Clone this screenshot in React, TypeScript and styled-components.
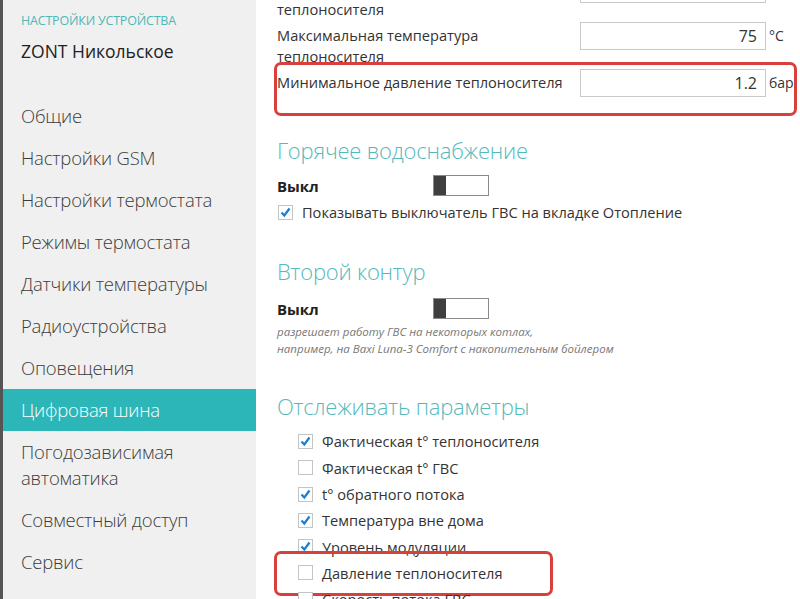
import styled, { createGlobalStyle } from 'styled-components';

const GlobalStyle = createGlobalStyle`
  html, body {
    margin: 0;
    padding: 0;
    height: 100%;
    overflow: hidden;
    background: #ffffff;
  }
  #root {
    height: 100%;
  }
`;

const Page = styled.div`
  display: flex;
  width: 800px;
  height: 599px;
  overflow: hidden;
  font-family: 'Open Sans', 'Noto Sans', sans-serif;
  color: #333;
`;

const Sidebar = styled.aside`
  flex: 0 0 253px;
  background: #f0f0f0;
  border-left: 3px solid #555;
  display: flex;
  flex-direction: column;
`;

const SidebarHead = styled.div`
  padding: 12px 0 0 18px;
  height: 95px;
  box-sizing: border-box;
  flex-shrink: 0;
`;

const Overline = styled.div`
  font-size: 12.5px;
  line-height: 18px;
  color: #4db8b8;
  text-transform: uppercase;
  letter-spacing: -0.2px;
`;

const DeviceName = styled.div`
  margin-top: 10px;
  font-size: 17.5px;
  line-height: 22px;
  color: #222;
`;

const Menu = styled.nav`
  display: flex;
  flex-direction: column;
`;

const MenuItem = styled.div<{ $active?: boolean }>`
  padding: 8px 12px 8px 18px;
  font-size: 18.5px;
  font-weight: 300;
  line-height: 26px;
  letter-spacing: -0.2px;
  color: ${(p) => (p.$active ? '#ffffff' : '#3c3c3c')};
  background: ${(p) => (p.$active ? '#2cb6b7' : 'transparent')};
`;

const Content = styled.main`
  flex: 1;
  padding: 0 0 0 21px;
  margin-top: -25px;
  display: flex;
  flex-direction: column;

  & > * {
    flex-shrink: 0;
  }
`;

const FieldRow = styled.div`
  position: relative;
  display: grid;
  grid-template-columns: 303px 186px auto;
  height: 47px;
  align-items: start;
`;

const FieldLabel = styled.div<{ $wide?: boolean }>`
  font-size: 14.6px;
  line-height: 21px;
  padding-top: 3px;
  color: #333;
  max-width: ${(p) => (p.$wide ? 'none' : '240px')};
  white-space: ${(p) => (p.$wide ? 'nowrap' : 'normal')};
`;

const FieldInput = styled.div`
  height: 28px;
  box-sizing: border-box;
  border: 1px solid #c9c9c9;
  background: #fff;
  font-size: 16px;
  line-height: 26px;
  text-align: right;
  padding-right: 8px;
  color: #333;
`;

const Unit = styled.div`
  font-size: 14px;
  line-height: 28px;
  padding-left: 3px;
  color: #333;
`;

const Highlight = styled.div<{ $top: number; $left: number; $width: number; $bottom: number }>`
  position: absolute;
  top: ${(p) => p.$top}px;
  left: ${(p) => p.$left}px;
  width: ${(p) => p.$width}px;
  bottom: ${(p) => p.$bottom}px;
  border: 3px solid #d8403b;
  border-radius: 7px;
  box-sizing: border-box;
  pointer-events: none;
`;

const SectionTitle = styled.h2<{ $gap: number }>`
  margin: ${(p) => p.$gap}px 0 0 0;
  font-size: 22px;
  font-weight: 300;
  line-height: 28px;
  color: #55b9ba;
  letter-spacing: -0.2px;
`;

const ToggleRow = styled.div<{ $gap?: number }>`
  display: grid;
  grid-template-columns: 156px 56px;
  align-items: center;
  margin-top: ${(p) => p.$gap ?? 9}px;
  height: 25px;
`;

const ToggleLabel = styled.span`
  font-size: 15px;
  font-weight: 700;
  color: #222;
`;

const Toggle = styled.div`
  width: 56px;
  height: 21px;
  box-sizing: border-box;
  border: 1px solid #8a8a8a;
  background: #fff;
  display: flex;
`;

const ToggleKnob = styled.div`
  width: 12px;
  height: 100%;
  background: #3f3f3f;
`;

const CheckRow = styled.label<{ $indent?: number; $gap?: number }>`
  position: relative;
  display: flex;
  align-items: center;
  gap: 9px;
  height: 26.3px;
  margin-top: ${(p) => p.$gap ?? 0}px;
  padding-left: ${(p) => p.$indent ?? 1}px;
  font-size: 14.6px;
  color: #333;
`;

const Box = styled.span`
  width: 15px;
  height: 15px;
  box-sizing: border-box;
  border: 1px solid #c4c4c4;
  background: #fff;
  display: flex;
  align-items: center;
  justify-content: center;
  flex: 0 0 auto;
`;

const Note = styled.div`
  font-size: 11.5px;
  font-style: italic;
  line-height: 17px;
  color: #777;
  margin-top: 2px;
`;

const List = styled.div`
  margin-top: 8px;
  display: flex;
  flex-direction: column;
`;

function Check({ checked }: { checked: boolean }) {
  return (
    <Box>
      {checked && (
        <svg width="11" height="11" viewBox="0 0 11 11">
          <path d="M1.5 5.5 L4.3 8.5 L9.5 1.5" fill="none" stroke="#1a7fd0" strokeWidth="2.2" />
        </svg>
      )}
    </Box>
  );
}

const menu = [
  'Общие',
  'Настройки GSM',
  'Настройки термостата',
  'Режимы термостата',
  'Датчики температуры',
  'Радиоустройства',
  'Оповещения',
  'Цифровая шина',
  'Погодозависимая автоматика',
  'Совместный доступ',
  'Сервис',
];

const params: [string, boolean][] = [
  ['Фактическая t° теплоносителя', true],
  ['Фактическая t° ГВС', false],
  ['t° обратного потока', true],
  ['Температура вне дома', true],
  ['Уровень модуляции', true],
  ['Давление теплоносителя', false],
  ['Скорость потока ГВС', false],
];

export default function App() {
  return (
    <Page>
      <GlobalStyle />
      <Sidebar>
        <SidebarHead>
          <Overline>Настройки устройства</Overline>
          <DeviceName>ZONT Никольское</DeviceName>
        </SidebarHead>
        <Menu>
          {menu.map((m) => (
            <MenuItem key={m} $active={m === 'Цифровая шина'}>
              {m === 'Погодозависимая автоматика' ? (
                <>
                  Погодозависимая
                  <br />
                  автоматика
                </>
              ) : (
                m
              )}
            </MenuItem>
          ))}
        </Menu>
      </Sidebar>
      <Content>
        <FieldRow>
          <FieldLabel>Минимальная температура теплоносителя</FieldLabel>
          <FieldInput>40</FieldInput>
          <Unit>°C</Unit>
        </FieldRow>
        <FieldRow>
          <FieldLabel>Максимальная температура теплоносителя</FieldLabel>
          <FieldInput>75</FieldInput>
          <Unit>°C</Unit>
        </FieldRow>
        <FieldRow>
          <FieldLabel $wide>Минимальное давление теплоносителя</FieldLabel>
          <FieldInput>1.2</FieldInput>
          <Unit>бар</Unit>
          <Highlight $top={-7} $left={-3} $width={523} $bottom={0} />
        </FieldRow>

        <SectionTitle $gap={20}>Горячее водоснабжение</SectionTitle>
        <ToggleRow>
          <ToggleLabel>Выкл</ToggleLabel>
          <Toggle>
            <ToggleKnob />
          </Toggle>
        </ToggleRow>
        <CheckRow $gap={1}>
          <Check checked />
          Показывать выключатель ГВС на вкладке Отопление
        </CheckRow>

        <SectionTitle $gap={32}>Второй контур</SectionTitle>
        <ToggleRow $gap={11}>
          <ToggleLabel>Выкл</ToggleLabel>
          <Toggle>
            <ToggleKnob />
          </Toggle>
        </ToggleRow>
        <Note>
          разрешает работу ГВС на некоторых котлах,
          <br />
          например, на Baxi Luna-3 Comfort с накопительным бойлером
        </Note>

        <SectionTitle $gap={35}>Отслеживать параметры</SectionTitle>
        <List>
          {params.map(([label, on]) => (
            <CheckRow key={label} $indent={21}>
              <Check checked={on} />
              {label}
              {label === 'Давление теплоносителя' && (
                <Highlight $top={-9} $left={-3} $width={279} $bottom={-10} />
              )}
            </CheckRow>
          ))}
        </List>
      </Content>
    </Page>
  );
}
